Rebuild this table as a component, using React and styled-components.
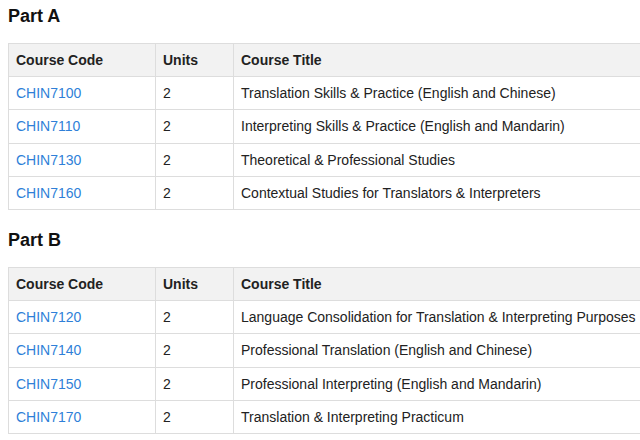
import React from 'react';
import styled, { createGlobalStyle } from 'styled-components';

const GlobalStyle = createGlobalStyle`
  html, body {
    margin: 0;
    padding: 0;
    background: #ffffff;
    overflow: hidden;
  }
  body {
    font-family: "Liberation Sans", Arial, sans-serif;
    color: #222222;
  }
`;

const Page = styled.div`
  padding: 6px 0 0 8px;
  width: 640px;
`;

const Section = styled.section`
  margin-bottom: 20px;
`;

const Heading = styled.h3`
  margin: 0 0 16px;
  font-size: 18px;
  line-height: 21px;
  font-weight: 700;
  color: #111111;
`;

const Table = styled.table`
  width: 640px;
  border-collapse: collapse;
  table-layout: fixed;
  font-size: 14px;
`;

const HeadCell = styled.th`
  box-sizing: border-box;
  text-align: left;
  font-weight: 700;
  background: #f2f2f2;
  border: 1px solid #dddddd;
  padding: 8px 7px;
  line-height: 16px;
  color: #222222;
  width: ${props => props.$width || 'auto'};
`;

const Cell = styled.td`
  border: 1px solid #dddddd;
  padding: 8px 7px;
  line-height: 16.3px;
  color: #222222;
  white-space: nowrap;
`;

const CodeLink = styled.a`
  color: #2f7fd8;
  text-decoration: none;
`;

const parts = [
  {
    title: 'Part A',
    courses: [
      ['CHIN7100', 2, 'Translation Skills & Practice (English and Chinese)'],
      ['CHIN7110', 2, 'Interpreting Skills & Practice (English and Mandarin)'],
      ['CHIN7130', 2, 'Theoretical & Professional Studies'],
      ['CHIN7160', 2, 'Contextual Studies for Translators & Interpreters'],
    ],
  },
  {
    title: 'Part B',
    courses: [
      ['CHIN7120', 2, 'Language Consolidation for Translation & Interpreting Purposes'],
      ['CHIN7140', 2, 'Professional Translation (English and Chinese)'],
      ['CHIN7150', 2, 'Professional Interpreting (English and Mandarin)'],
      ['CHIN7170', 2, 'Translation & Interpreting Practicum'],
    ],
  },
];

const CourseTable = ({ courses }) => (
  <Table>
    <thead>
      <tr>
        <HeadCell $width="147px">Course Code</HeadCell>
        <HeadCell $width="78px">Units</HeadCell>
        <HeadCell>Course Title</HeadCell>
      </tr>
    </thead>
    <tbody>
      {courses.map(([code, units, title]) => (
        <tr key={code}>
          <Cell>
            <CodeLink href="#">{code}</CodeLink>
          </Cell>
          <Cell>{units}</Cell>
          <Cell>{title}</Cell>
        </tr>
      ))}
    </tbody>
  </Table>
);

export default function App() {
  return (
    <>
      <GlobalStyle />
      <Page>
        {parts.map(part => (
          <Section key={part.title}>
            <Heading>{part.title}</Heading>
            <CourseTable courses={part.courses} />
          </Section>
        ))}
      </Page>
    </>
  );
}
